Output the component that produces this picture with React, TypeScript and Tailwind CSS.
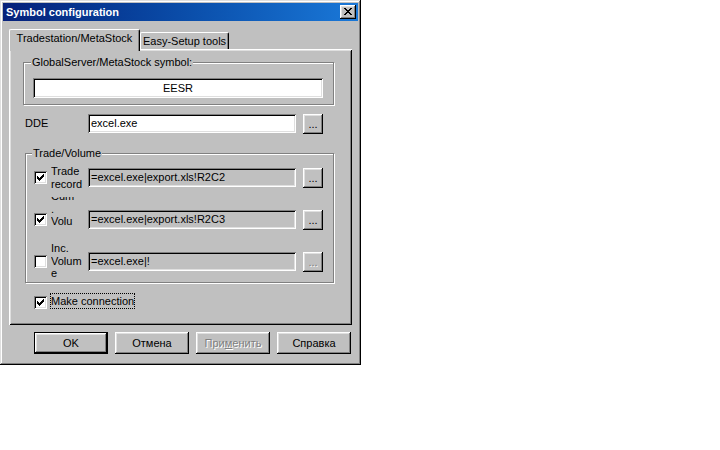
import React from 'react';

const raised =
  'shadow-[inset_-1px_-1px_#000000,inset_1px_1px_#ffffff,inset_-2px_-2px_#808080,inset_2px_2px_#dfdfdf]';
const sunken =
  'shadow-[inset_1px_1px_#808080,inset_-1px_-1px_#ffffff,inset_2px_2px_#000000,inset_-2px_-2px_#dfdfdf]';
const etched = 'border border-[#808080] shadow-[inset_1px_1px_#ffffff,1px_1px_#ffffff]';
const disabledText = 'text-[#808080] [text-shadow:1px_1px_0_#ffffff]';

function Check({ checked, className = '' }: { checked: boolean; className?: string }) {
  return (
    <div className={`w-[13px] h-[13px] shrink-0 bg-white ${sunken} flex items-center justify-center ${className}`}>
      {checked && (
        <svg width="7" height="7" viewBox="0 0 7 7" shapeRendering="crispEdges">
          <path
            d="M0 2h1v3h-1z M1 3h1v3h-1z M2 4h1v3h-1z M3 3h1v3h-1z M4 2h1v3h-1z M5 1h1v3h-1z M6 0h1v3h-1z"
            fill="#000000"
          />
        </svg>
      )}
    </div>
  );
}

function DotsButton({ disabled = false }: { disabled?: boolean }) {
  return (
    <div
      className={`ml-[7px] w-[20px] h-[20px] shrink-0 ${raised} flex items-center justify-center leading-[13px] ${
        disabled ? disabledText : ''
      }`}
    >
      ...
    </div>
  );
}

function Field({ value }: { value: string }) {
  return (
    <div className={`w-[208px] h-[19px] shrink-0 bg-[#c0c0c0] ${sunken} flex items-center pl-[3px] whitespace-nowrap`}>
      {value}
    </div>
  );
}

export default function App() {
  // labels are clipped the same way the original static controls are
  const rows = [
    { checked: true, lines: ['Trade', 'record'], clip: '-mt-[4px] h-[26px]', inner: 'pt-[1px]', value: '=excel.exe|export.xls!R2C2' },
    { checked: true, lines: ['Cum', '.', 'Volu'], clip: '-mt-[13px] h-[33px]', inner: '-mt-[7px]', value: '=excel.exe|export.xls!R2C3' },
    { checked: false, lines: ['Inc.', 'Volum', 'e'], clip: '-mt-[10px] h-[35px]', inner: '', value: '=excel.exe|!', disabled: true },
  ];

  return (
    <div className="w-[720px] h-[450px] bg-white text-black text-[11px] font-['Liberation_Sans',Arial,sans-serif]">
      <div className="w-[361px] h-[365px] bg-[#c0c0c0] p-[3px] flex flex-col shadow-[inset_-1px_-1px_#000000,inset_1px_1px_#dfdfdf,inset_-2px_-2px_#808080,inset_2px_2px_#ffffff]">
        {/* title bar */}
        <div className="h-[18px] shrink-0 bg-linear-to-r from-[#06207a] to-[#1a78d8] flex items-center pl-[3px] pr-[2px]">
          <span className="text-white font-bold leading-[13px]">Symbol configuration</span>
          <div className={`ml-auto w-[16px] h-[14px] bg-[#c0c0c0] ${raised} flex items-center justify-center`}>
            <svg width="8" height="7" viewBox="0 0 8 7" shapeRendering="crispEdges" className="-mt-[1px] -ml-[1px]">
              <path
                d="M0 0h2v1h-2z M6 0h2v1h-2z M1 1h2v1h-2z M5 1h2v1h-2z M2 2h4v1h-4z M3 3h2v1h-2z M2 4h4v1h-4z M1 5h2v1h-2z M5 5h2v1h-2z M0 6h2v1h-2z M6 6h2v1h-2z"
                fill="#000000"
              />
            </svg>
          </div>
        </div>

        {/* tabs */}
        <div className="mt-[8px] ml-[6px] h-[20px] flex items-end">
          <div className="relative z-10 -mb-[2px] h-[22px] w-[131px] bg-[#c0c0c0] border-t border-l border-white border-r border-r-black rounded-t-[2px] shadow-[inset_-1px_0_#808080] flex justify-center pt-[2px] leading-[13px]">
            Tradestation/MetaStock
          </div>
          <div className="h-[17px] w-[89px] border-t border-l border-white border-r border-r-black rounded-t-[2px] shadow-[inset_-1px_0_#808080] flex justify-center pt-[2px] leading-[13px]">
            Easy-Setup tools
          </div>
        </div>

        {/* tab panel */}
        <div className="ml-[6px] w-[343px] h-[276px] shrink-0 flex flex-col shadow-[inset_1px_1px_#ffffff,inset_-1px_-1px_#000000,inset_2px_2px_#dfdfdf,inset_-2px_-2px_#808080]">
          <div className={`mt-[13px] ml-[14px] w-[311px] h-[43px] ${etched}`}>
            <div className="-mt-[7px] ml-[7px] w-fit px-[1px] bg-[#c0c0c0] leading-[13px]">GlobalServer/MetaStock symbol:</div>
            <div className={`mt-[9px] ml-[9px] w-[290px] h-[20px] bg-white ${sunken} flex items-center justify-center`}>
              EESR
            </div>
          </div>

          <div className="mt-[9px] ml-[16px] h-[20px] flex items-start">
            <div className="w-[63px] h-[19px] flex items-center">DDE</div>
            <div className={`w-[208px] h-[19px] bg-white ${sunken} flex items-center pl-[3px]`}>excel.exe</div>
            <DotsButton />
          </div>

          <div className={`mt-[19px] ml-[16px] w-[309px] h-[130px] ${etched} flex flex-col`}>
            <div className="-mt-[7px] ml-[6px] w-fit px-[1px] bg-[#c0c0c0] leading-[13px]">Trade/Volume</div>
            {rows.map((r, i) => (
              <div key={i} className={`${i === 0 ? 'mt-[8px]' : 'mt-[22px]'} ml-[8px] h-[20px] flex items-start`}>
                <Check checked={r.checked} className="mt-[3px]" />
                <div className={`ml-[4px] w-[37px] shrink-0 overflow-hidden ${r.clip}`}>
                  <div className={`${r.inner} leading-[12.5px]`}>
                    {r.lines.map((l, j) => (
                      <div key={j}>{l}</div>
                    ))}
                  </div>
                </div>
                <Field value={r.value} />
                <DotsButton disabled={r.disabled} />
              </div>
            ))}
          </div>

          <div className="mt-[10px] ml-[25px] flex items-start">
            <Check checked className="mt-[3px]" />
            <div className="ml-[3px] h-[16px] border border-dotted border-black leading-[14px] whitespace-nowrap">
              Make connection
            </div>
          </div>
        </div>

        {/* buttons */}
        <div className="mt-[7px] ml-[31px] flex gap-[7px]">
          <div className={`w-[74px] h-[22px] border border-black ${raised} flex items-center justify-center`}>OK</div>
          <div className={`w-[74px] h-[22px] ${raised} flex items-center justify-center`}>Отмена</div>
          <div className={`w-[74px] h-[22px] ${raised} flex items-center justify-center ${disabledText}`}>
            При<span className="underline">м</span>енить
          </div>
          <div className={`w-[74px] h-[22px] ${raised} flex items-center justify-center`}>Справка</div>
        </div>
      </div>
    </div>
  );
}
